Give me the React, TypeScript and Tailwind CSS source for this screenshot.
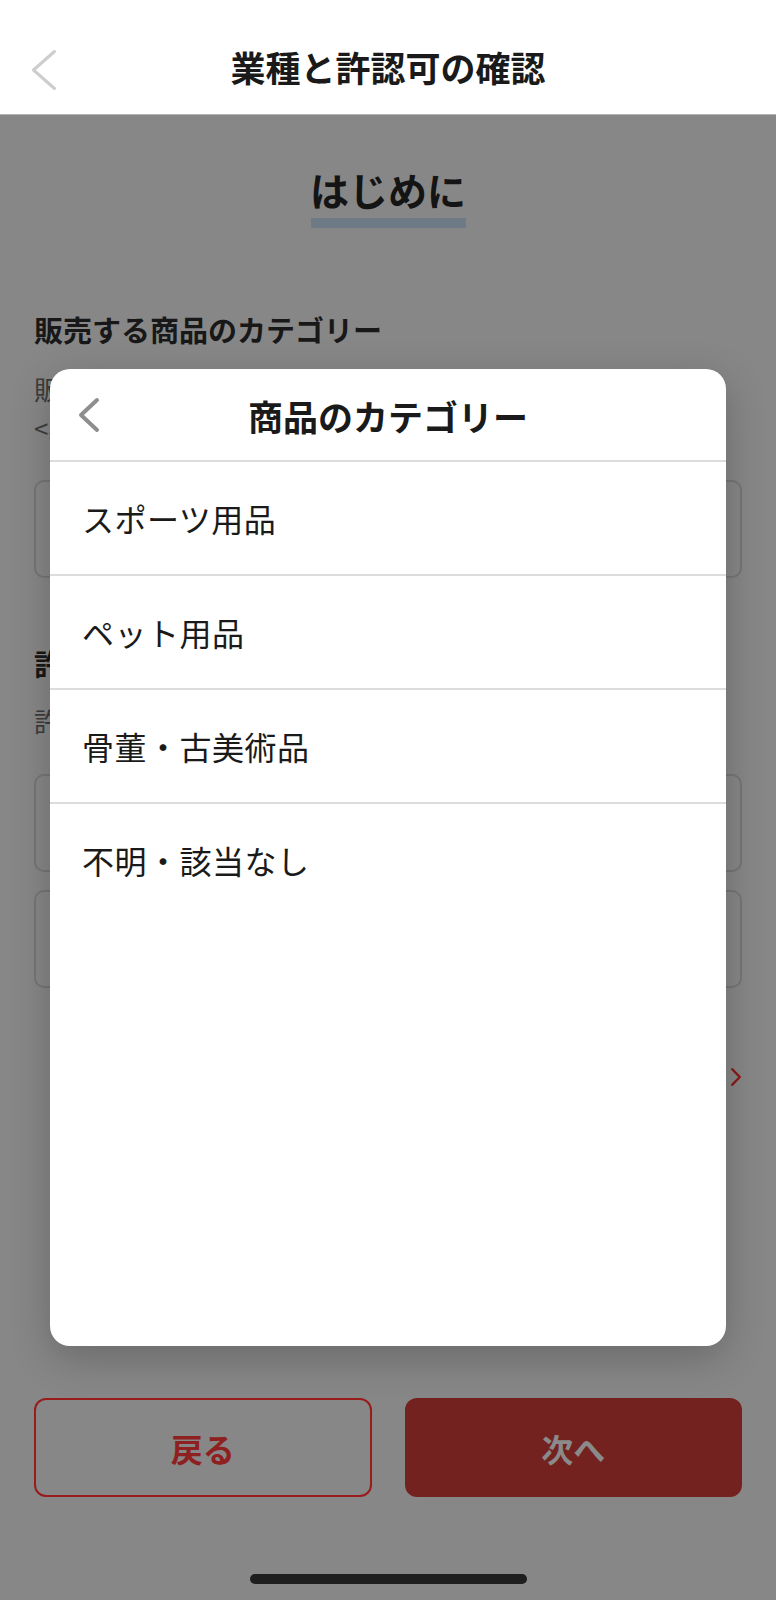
import React from 'react';

const categories = ['スポーツ用品', 'ペット用品', '骨董・古美術品', '不明・該当なし'];

const Chevron: React.FC<{ w: number; h: number; color: string; stroke: number; dir?: 'left' | 'right' }> = ({
  w,
  h,
  color,
  stroke,
  dir = 'left',
}) => {
  const p = stroke / 2 + 1;
  const points =
    dir === 'left' ? `${w - p},${p} ${p},${h / 2} ${w - p},${h - p}` : `${p},${p} ${w - p},${h / 2} ${p},${h - p}`;
  return (
    <svg width={w} height={h} viewBox={`0 0 ${w} ${h}`} fill="none">
      <polyline points={points} stroke={color} strokeWidth={stroke} strokeLinecap="round" strokeLinejoin="round" />
    </svg>
  );
};

export default function App() {
  return (
    <div
      className="relative w-[776px] h-[1600px] overflow-hidden bg-[#878787] text-[#1a1a1a]"
      style={{ fontFamily: '"Noto Sans CJK JP", "Noto Sans", sans-serif' }}
    >
      {/* Nav bar */}
      <header className="relative h-[115px] bg-white border-b border-[#b4b4b4] flex items-center justify-center">
        <div className="absolute left-[31px] top-[49px]">
          <Chevron w={26} h={42} color="#cdcdcd" stroke={3} />
        </div>
        <h1 className="text-[35px] font-bold leading-[44px] pt-[20px]">業種と許認可の確認</h1>
      </header>

      {/* Dimmed page */}
      <main className="px-[34px] flex flex-col">
        <div className="mt-[50px] flex flex-col items-center">
          <h2 className="text-[39px] font-bold leading-[48px] text-[#141414]">はじめに</h2>
          <div className="mt-[5px] w-[155px] h-[10px] bg-[#6e7b86]" />
        </div>

        <h3 className="mt-[81px] text-[29px] font-bold leading-[40px] text-[#181818]">販売する商品のカテゴリー</h3>
        <div className="mt-[20px] text-[26px] leading-[39px] text-[#3c3c3c]">
          <p>販売する商品</p>
          <p>&lt;必須&gt;</p>
        </div>
        <div className="mt-[33px] h-[98px] rounded-[10px] border-2 border-[#767676]" />

        <h3 className="mt-[65px] text-[29px] font-bold leading-[40px] text-[#181818]">許認可の有無</h3>
        <p className="mt-[18px] text-[26px] leading-[39px] text-[#3c3c3c]">許認可</p>
        <div className="mt-[34px] h-[98px] rounded-[10px] border-2 border-[#767676]" />
        <div className="mt-[18px] h-[98px] rounded-[10px] border-2 border-[#767676]" />

        <div className="mt-[69px] h-[40px] flex items-center justify-end gap-2 text-[20px] text-[#8b1a1a]">
          <span>詳しく見る</span>
          <Chevron w={12} h={20} color="#8b1a1a" stroke={2.5} dir="right" />
        </div>

        <div className="mt-[301px] grid grid-cols-2 gap-[33px]">
          <button className="h-[99px] rounded-[12px] border-2 border-[#981c1c] text-[32px] font-bold text-[#8e2020]">
            戻る
          </button>
          <button className="h-[99px] rounded-[12px] bg-[#74221f] text-[32px] font-bold text-[#8a8a8a]">次へ</button>
        </div>

        <div className="mt-[77px] mx-auto w-[277px] h-[10px] rounded-full bg-[#1e1e1e]" />
      </main>

      {/* Category picker */}
      <div className="absolute left-[50px] top-[369px] w-[676px] h-[977px] bg-white rounded-[20px] shadow-[0_12px_40px_rgba(0,0,0,0.22)] overflow-hidden">
        <div className="relative h-[91px] flex items-center justify-center">
          <div className="absolute left-[28px] top-[28px]">
            <Chevron w={22} h={36} color="#8e8e8e" stroke={4} />
          </div>
          <h2 className="text-[35px] font-bold leading-[44px] pt-[2px]">商品のカテゴリー</h2>
        </div>
        <ul>
          {categories.map((c) => (
            <li
              key={c}
              className="h-[114px] flex items-center pl-[32px] text-[32px] tracking-[0.5px] leading-[40px] text-[#1a1a1a] border-t-2 border-[#dcdcdc]"
            >
              {c}
            </li>
          ))}
        </ul>
      </div>
    </div>
  );
}
